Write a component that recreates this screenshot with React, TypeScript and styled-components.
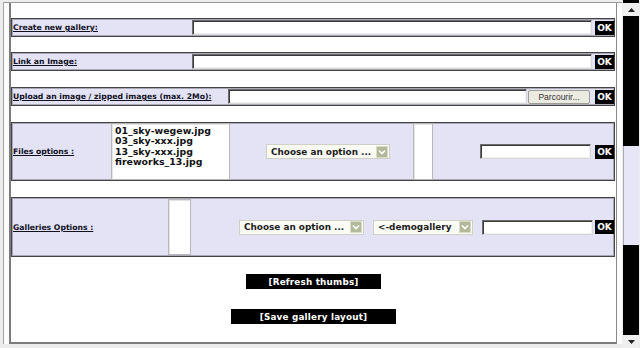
import React from "react";
import styled, { createGlobalStyle } from "styled-components";

const GlobalStyle = createGlobalStyle`
  html, body {
    margin: 0;
    padding: 0;
  }
  body {
    width: 640px;
    height: 348px;
    overflow: hidden;
    background: #ececec;
    font-family: "DejaVu Sans", Verdana, sans-serif;
  }
`;

const Window = styled.div`
  display: flex;
  width: 640px;
  height: 348px;
`;

const Outer = styled.div`
  flex: 1;
  min-width: 0;
  display: flex;
  margin: 2px 0 4px 3px;
  padding-left: 5px;
  padding-right: 5px;
  border-left: 1px solid #a4a4a4;
  border-top: 1px solid #9a9a9a;
  background: #fcfcfc;
`;

const Panel = styled.div`
  flex: 1;
  display: flex;
  flex-direction: column;
  padding-top: 15px;
  border-left: 2px solid #7c7c7c;
  border-right: 1px solid #8a8a8a;
  border-bottom: 2px solid #7c7c7c;
  background: #fff;
`;

const Box = styled.div<{ $h: number; $mt?: number }>`
  display: flex;
  align-items: center;
  height: ${(p) => p.$h}px;
  margin: ${(p) => p.$mt ?? 0}px 1px 0 0;
  border: 1px solid #444;
  box-shadow: inset 0 0 0 1px #a9a9b6;
  background: #e3e3f5;
  box-sizing: border-box;
`;

const Label = styled.div<{ $w: number }>`
  width: ${(p) => p.$w}px;
  flex: none;
  padding-left: 1px;
  box-sizing: border-box;
  font-size: 7.7px;
  font-weight: bold;
  color: #10101e;
  text-decoration: underline;
  white-space: nowrap;
`;

const TextInput = styled.input<{ $w: number; $ml?: number }>`
  width: ${(p) => p.$w}px;
  height: 15px;
  flex: none;
  margin: 0 0 0 ${(p) => p.$ml ?? 0}px;
  padding: 0;
  box-sizing: border-box;
  background: #fff;
  border: 1px solid;
  border-color: #6c6c6c #d8d8d8 #d8d8d8 #6c6c6c;
  box-shadow: inset 1px 1px 0 #3a3a3a, inset -1px -1px 0 #efefef;
  outline: none;
`;

const OkButton = styled.div<{ $ml: number }>`
  width: 19px;
  height: 14px;
  flex: none;
  margin-left: ${(p) => p.$ml}px;
  display: flex;
  align-items: center;
  justify-content: center;
  background: #000;
  color: #fff;
  font-size: 9px;
  font-weight: bold;
`;

const BrowseButton = styled.div`
  width: 62px;
  height: 14px;
  flex: none;
  margin-left: 1px;
  display: flex;
  align-items: center;
  justify-content: center;
  box-sizing: border-box;
  border: 1px solid #9c9c94;
  border-radius: 2px;
  background: #ecebe2;
  color: #333;
  font-family: "Liberation Sans", Arial, sans-serif;
  font-size: 8.5px;
`;

const ListBox = styled.div<{ $w: number; $h: number; $ml?: number }>`
  width: ${(p) => p.$w}px;
  height: ${(p) => p.$h}px;
  flex: none;
  margin-left: ${(p) => p.$ml ?? 0}px;
  padding: 2px 0 0 3px;
  box-sizing: border-box;
  background: #fff;
  border: 1px solid #b8b8b8;
  box-shadow: inset 1px 1px 0 #e4e4e4;
  font-size: 9.4px;
  font-weight: bold;
  line-height: 10.4px;
  color: #111;
  white-space: nowrap;
  overflow: hidden;
`;

const Select = styled.div<{ $w: number; $ml: number }>`
  width: ${(p) => p.$w}px;
  height: 15px;
  flex: none;
  margin-left: ${(p) => p.$ml}px;
  display: flex;
  align-items: center;
  justify-content: space-between;
  padding: 0 1px 0 4px;
  box-sizing: border-box;
  background: #fbfbf6;
  border: 1px solid #cfcfc4;
  font-size: 8.9px;
  font-weight: bold;
  color: #1c1c1c;
  white-space: nowrap;
`;

const SelectArrow = styled.span`
  width: 12px;
  height: 12px;
  flex: none;
  display: flex;
  align-items: center;
  justify-content: center;
  background: #b2b89a;
  border: 1px solid #d9dcc8;
  box-sizing: border-box;
`;

const Actions = styled.div`
  display: flex;
  flex-direction: column;
  align-items: center;
  gap: 20px;
  margin-top: 17px;
`;

const ActionButton = styled.div<{ $w: number }>`
  width: ${(p) => p.$w}px;
  height: 15px;
  display: flex;
  align-items: center;
  justify-content: center;
  background: #000;
  color: #fff;
  font-size: 8.8px;
  font-weight: bold;
  letter-spacing: 0.2px;
`;

/* scrollbar: black body, lavender track window in the middle */
const Scrollbar = styled.div`
  width: 16px;
  flex: none;
  margin: 0 1px 0 1px;
  display: flex;
  flex-direction: column;
  background-color: #000000;
`;

const ScrollArrow = styled.div<{ $mt?: number }>`
  height: 13px;
  flex: none;
  margin-top: ${(p) => p.$mt ?? 0}px;
  display: flex;
  align-items: center;
  justify-content: center;
  background: #efefef;
`;

const ScrollTrack = styled.div`
  height: 99px;
  flex: none;
  margin: 130px 0 90px;
  background: #e6e6f8;
  border-left: 1px solid #a8a8b8;
`;

const Chevron = () => (
  <svg width="8" height="6" viewBox="0 0 8 6">
    <path d="M1 1.5 L4 4.5 L7 1.5" fill="none" stroke="#fff" strokeWidth="1.6" />
  </svg>
);

const Triangle = ({ up }: { up?: boolean }) => (
  <svg width="7" height="4" viewBox="0 0 7 4">
    <path d={up ? "M0 4 L3.5 0 L7 4 Z" : "M0 0 L3.5 4 L7 0 Z"} fill="#222" />
  </svg>
);

const files = ["01_sky-wegew.jpg", "03_sky-xxx.jpg", "13_sky-xxx.jpg", "fireworks_13.jpg"];

export default function App() {
  return (
    <>
      <GlobalStyle />
      <Window>
        <Outer>
          <Panel>
            <Box $h={19}>
              <Label $w={180}>Create new gallery:</Label>
              <TextInput $w={400} />
              <OkButton $ml={3}>OK</OkButton>
            </Box>
            <Box $h={19} $mt={15}>
              <Label $w={180}>Link an Image:</Label>
              <TextInput $w={400} />
              <OkButton $ml={3}>OK</OkButton>
            </Box>
            <Box $h={19} $mt={16}>
              <Label $w={216}>Upload an image / zipped images (max. 2Mo):</Label>
              <TextInput $w={299} />
              <BrowseButton>Parcourir...</BrowseButton>
              <OkButton $ml={5}>OK</OkButton>
            </Box>
            <Box $h={59} $mt={16}>
              <Label $w={99}>Files options :</Label>
              <ListBox $w={119} $h={57}>
                {files.map((f) => (
                  <div key={f}>{f}</div>
                ))}
              </ListBox>
              <Select $w={124} $ml={36}>
                Choose an option ...
                <SelectArrow>
                  <Chevron />
                </SelectArrow>
              </Select>
              <ListBox $w={20} $h={57} $ml={23} />
              <TextInput $w={111} $ml={47} />
              <OkButton $ml={4}>OK</OkButton>
            </Box>
            <Box $h={60} $mt={16}>
              <Label $w={156}>Galleries Options :</Label>
              <ListBox $w={23} $h={56} />
              <Select $w={125} $ml={48}>
                Choose an option ...
                <SelectArrow>
                  <Chevron />
                </SelectArrow>
              </Select>
              <Select $w={100} $ml={9}>
                &lt;-demogallery
                <SelectArrow>
                  <Chevron />
                </SelectArrow>
              </Select>
              <TextInput $w={111} $ml={9} />
              <OkButton $ml={2}>OK</OkButton>
            </Box>
            <Actions>
              <ActionButton $w={135}>[Refresh thumbs]</ActionButton>
              <ActionButton $w={165}>[Save gallery layout]</ActionButton>
            </Actions>
          </Panel>
        </Outer>
        <Scrollbar>
          <ScrollArrow $mt={3}>
            <Triangle up />
          </ScrollArrow>
          <ScrollTrack />
          <ScrollArrow>
            <Triangle />
          </ScrollArrow>
        </Scrollbar>
      </Window>
    </>
  );
}
